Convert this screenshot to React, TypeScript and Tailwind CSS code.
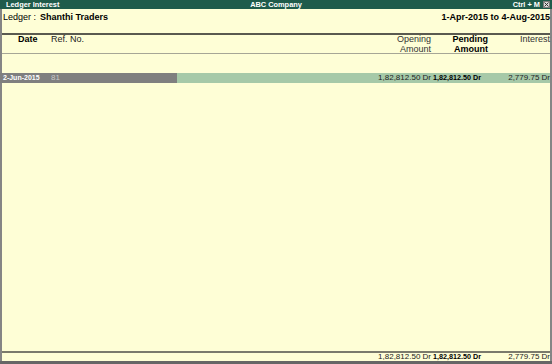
import React from "react";

export default function App() {
  return (
    <div className="w-[552px] h-[364px] flex flex-col bg-[#fefed6] overflow-hidden whitespace-nowrap font-['Liberation_Sans',Arial,sans-serif] text-black">
      {/* Title bar */}
      <div className="h-[9px] bg-[#1f5b4b] text-white text-[7.4px] font-bold leading-[9px] flex items-center relative px-[6px]">
        <span>Ledger Interest</span>
        <span className="absolute left-0 right-0 text-center pointer-events-none">ABC Company</span>
        <span className="ml-auto mr-[3px]">Ctrl + M</span>
        <span className="w-[7px] h-[7px] bg-[#d8d8d8] border border-[#7a7a7a] flex items-center justify-center mr-[-4px]">
          <svg width="5" height="5" viewBox="0 0 5 5">
            <path d="M0.5 0.5 L4.5 4.5 M4.5 0.5 L0.5 4.5" stroke="#333" strokeWidth="1" />
          </svg>
        </span>
      </div>

      {/* Body */}
      <div className="flex-1 flex flex-col border-l-2 border-r-2 border-[#858585]">
        {/* Ledger row */}
        <div className="h-[24px] flex items-start pt-[3px] text-[9px] leading-[11px]">
          <span className="pl-[1px] w-[38px]">Ledger :</span>
          <span className="font-bold">Shanthi Traders</span>
          <span className="ml-auto font-bold">1-Apr-2015 to 4-Aug-2015</span>
        </div>
        <div className="h-[2px] bg-[#5a5a50]" />

        {/* Column header */}
        <div className="h-[18px] flex text-[9px] leading-[9.5px]">
          <span className="pl-[16px] w-[49px] font-bold">Date</span>
          <span className="text-[#222]">Ref. No.</span>
          <div className="ml-auto flex">
            <div className="w-[60px] text-right text-[#333]">
              <div>Opening</div>
              <div>Amount</div>
            </div>
            <div className="w-[57px] text-right font-bold">
              <div>Pending</div>
              <div>Amount</div>
            </div>
            <div className="w-[62px] text-right text-[#333]">
              <div>Interest</div>
            </div>
          </div>
        </div>
        <div className="h-[1px] bg-[#a6a696]" />

        {/* Spacer */}
        <div className="h-[19px]" />

        {/* Data row */}
        <div className="h-[10px] flex items-center text-[8px] leading-[10px] -ml-[2px]">
          <div className="w-[177px] h-full bg-[#7f7f7f] flex items-center">
            <span className="pl-[3px] w-[51px] text-white font-bold text-[7px]">2-Jun-2015</span>
            <span className="text-[#c8c8c8]">81</span>
          </div>
          <div className="flex-1 h-full bg-[#a6c9a8] flex items-center justify-end">
            <span className="w-[60px] text-right text-[#222]">1,82,812.50 Dr</span>
            <span className="w-[57px] text-right font-bold text-[7.2px] pr-[7px]">1,82,812.50 Dr</span>
            <span className="w-[62px] text-right text-[#222]">2,779.75 Dr</span>
          </div>
        </div>

        <div className="flex-1" />

        {/* Bottom totals */}
        <div className="h-[2px] bg-[#7a7a6c]" />
        <div className="h-[8px] flex items-center justify-end text-[8px] leading-[8px]">
          <span className="w-[60px] text-right text-[#222]">1,82,812.50 Dr</span>
          <span className="w-[57px] text-right font-bold text-[7.2px] pr-[7px]">1,82,812.50 Dr</span>
          <span className="w-[62px] text-right text-[#222]">2,779.75 Dr</span>
        </div>
      </div>
      <div className="h-[3px] bg-[#666666]" />
    </div>
  );
}
